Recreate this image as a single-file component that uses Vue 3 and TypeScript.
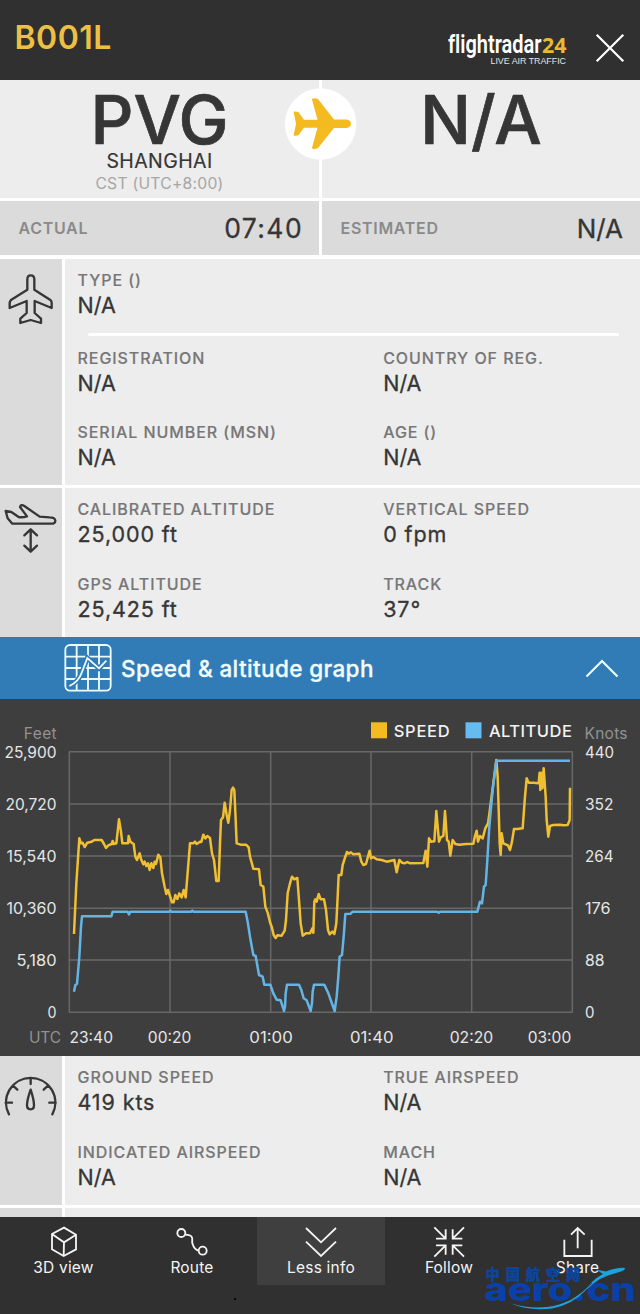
<script setup lang="ts">
interface Field {
  label: string
  value: string
}

type Segment = [offset: number, points: string]

const aircraft: Field[] = [
  { label: 'REGISTRATION', value: 'N/A' },
  { label: 'COUNTRY OF REG.', value: 'N/A' },
  { label: 'SERIAL NUMBER (MSN)', value: 'N/A' },
  { label: 'AGE ()', value: 'N/A' },
]

const altitudeFields: Field[] = [
  { label: 'CALIBRATED ALTITUDE', value: '25,000 ft' },
  { label: 'VERTICAL SPEED', value: '0 fpm' },
  { label: 'GPS ALTITUDE', value: '25,425 ft' },
  { label: 'TRACK', value: '37°' },
]

const speedFields: Field[] = [
  { label: 'GROUND SPEED', value: '419 kts' },
  { label: 'TRUE AIRSPEED', value: 'N/A' },
  { label: 'INDICATED AIRSPEED', value: 'N/A' },
  { label: 'MACH', value: 'N/A' },
]

const isNumeric = (value: string): boolean => /\d/.test(value)

// Chart series, in thirds of a pixel; each segment has its own x offset.
const speedSegments: Segment[] = [
  [0, '222,672 229,520 238,385 243,400 248,398 254,411 262,398 275,395 283,390 305,390 312,402 318,414 325,406 335,402 338,393 341,402 349,400 353,365 357,328 363,365 367,400 384,400 386,378 391,395 401,402 406,440 411,450 419,430 424,450 430,463 434,455 439,468 444,460 449,480 454,460 460,474 464,455 468,462 475,434 481,442 486,490 490,510 494,530 499,552 504,540 509,555 516,577 521,577 526,555 532,567 538,550 545,562 551,540 557,562 562,500 566,450 570,400 580,400 585,395 590,402 600,395 604,396 610,374 616,385 622,378 630,384 636,430 642,450 649,513 656,513'],
  [600, '60,400 63,330 69,322 74,278 80,315 85,338 90,300 95,240 99,233 103,240 107,330 110,400 122,404 138,404 146,412 150,440 160,476 177,478 182,525 190,530 196,590 203,608 211,640 215,650 221,675 227,684 232,676 245,677 254,662 258,630 263,550 270,520 276,500 283,508 292,504 297,570 302,640 308,677 318,670 330,670 337,655 340,668 343,575 346,568 350,575 356,552 362,568 372,568 378,600 384,660 389,673 397,665 403,672 409,640 413,560 416,495 424,495 428,465 436,440 441,426 446,431 453,427 460,433 478,431 484,455 490,465 498,462 504,440 509,422 513,445 520,441 530,448 545,450 560,455 583,450 590,487 598,450'],
  [1200, '6,458 14,460 22,456 30,460 70,459 77,422 82,470 87,385 93,395 103,394 109,303 117,395 122,382 130,378 135,303 141,390 146,395 151,437 158,390 166,402 178,404 198,402 220,401 225,378 230,362 234,395 240,378 248,385 256,355 264,340 268,312 278,235 289,150 293,200 297,330 299,400 302,435 305,370 310,400 324,406 330,420 336,395 342,357 352,357 368,355 375,260 380,205 386,218 400,218 416,220 419,188 421,240 424,188 427,235 431,175 437,260 440,330 445,380 450,348 460,345 480,344 490,346 503,345 509,330 510,233'],
]

const altitudeSegments: Segment[] = [
  [0, '222,845 226,825 231,822 238,740 243,650 246,619 334,619 338,605 383,605 387,613 391,605 508,605 511,602 514,605 574,605 577,602 580,605'],
  [600, '60,605 137,605 143,635 150,680 160,735 167,738 177,795 188,800 193,824 211,824 220,850 230,869 242,871 252,903 255,890 257,850 261,824 297,824 304,840 311,865 320,871 332,903 336,880 338,845 342,824 373,824 385,850 404,903 410,860 415,800 419,740 426,735 431,680 436,612 452,611 458,605'],
  [1200, '112,605 116,608 120,605 232,605 240,575 246,580 252,530 257,525 262,450 268,350 278,240 289,152 510,152'],
]

function join(segments: Segment[]): string {
  return segments
    .flatMap(([offset, points]) =>
      points.split(' ').map((p) => {
        const [x, y] = p.split(',').map(Number)
        return `${x + offset},${y}`
      }),
    )
    .join(' ')
}

const speedLine = join(speedSegments)
const altitudeLine = join(altitudeSegments)

const rows = [125, 282, 438, 595, 750, 907]
const cols = [208, 510, 812, 1113, 1415, 1717]

const feet = [
  { text: '25,900', y: 59, w: 52 },
  { text: '20,720', y: 111, w: 51 },
  { text: '15,540', y: 163, w: 50 },
  { text: '10,360', y: 215.3, w: 50 },
  { text: '5,180', y: 267, w: 40 },
  { text: '0', y: 319.3, w: 9 },
]

const knots = [
  { text: '440', y: 59, w: 29 },
  { text: '352', y: 111, w: 28.5 },
  { text: '264', y: 163, w: 28.5 },
  { text: '176', y: 215.3, w: 25.5 },
  { text: '88', y: 267, w: 19.5 },
  { text: '0', y: 319.3, w: 9.5 },
]

const times = [
  { text: '23:40', x: 69.5 },
  { text: '00:20', x: 147.8 },
  { text: '01:00', x: 249.3 },
  { text: '01:40', x: 350 },
  { text: '02:20', x: 449.7 },
  { text: '03:00', x: 527.7 },
]
</script>

<template>
  <div class="page">
    <header class="top">
      <h1 class="callsign">B001L</h1>
      <svg class="logo" width="122" height="40" viewBox="446 28 122 40">
        <text class="brand" x="448" y="52.7" textLength="93.500" lengthAdjust="spacingAndGlyphs">flightradar</text>
        <text class="brand-num" x="542" y="52.7" textLength="24.500" lengthAdjust="spacingAndGlyphs">24</text>
        <text class="brand-sub" x="490.5" y="63.7" textLength="75.5" lengthAdjust="spacingAndGlyphs">LIVE AIR TRAFFIC</text>
      </svg>
      <svg class="close" width="30" height="30" viewBox="0 0 30 30">
        <path d="M1.7 1.7L28.3 28.3M28.3 1.7L1.7 28.3" />
      </svg>
    </header>

    <section class="airports">
      <div class="airport">
        <div class="code">PVG</div>
        <div class="city">SHANGHAI</div>
        <div class="zone">CST (UTC+8:00)</div>
      </div>
      <div class="airport">
        <div class="code">N/A</div>
      </div>
      <svg class="badge" width="72" height="72" viewBox="285 87.5 72 72">
        <circle cx="320.7" cy="123.5" r="35.7" fill="#fff" />
        <path
          d="M293.6 111.2Q296.500 110.600 298.600 111.800L304 119.200L317.500 119.300L311.800 98.200Q315 97 318 98.600L334 118.900H346.500Q351 119.600 351 123.200Q351 126.800 346.500 127.500H334L318 147.400Q315 149 311.800 148L317.500 127.200L304 127.200L298.600 134.600Q296.500 135.600 293.600 135L296 123.200Z"
          fill="#f4bb20"
        />
      </svg>
    </section>

    <section class="times">
      <div class="time"><span class="time-label">ACTUAL</span><span class="time-value clock">07:40</span></div>
      <div class="time"><span class="time-label">ESTIMATED</span><span class="time-value">N/A</span></div>
    </section>

    <section class="info aircraft">
      <div class="side">
        <svg width="62" height="80" viewBox="0 0 186 240">
          <path
            class="ink"
            d="M82 92V61Q82 49 92 49Q103 49 103 61V92L150 122Q155 126 155 131V147L104 126V162L123 179V192L92 183L61 192V179L80 162V126L29 147V131Q30 126 34 122Z"
          />
        </svg>
      </div>
      <div class="body">
        <div class="field">
          <div class="label">TYPE ()</div>
          <div class="value">N/A</div>
        </div>
        <hr class="rule" />
        <div class="grid">
          <div v-for="f in aircraft" :key="f.label" class="field">
            <div class="label">{{ f.label }}</div>
            <div class="value" :class="{ numeric: isNumeric(f.value) }">{{ f.value }}</div>
          </div>
        </div>
      </div>
    </section>

    <section class="info altitude">
      <div class="side">
        <svg width="62" height="80" viewBox="0 24 186 240">
          <path
            class="ink"
            d="M17 93L23 115L37 131H152Q166 131 166 122Q165 112 148 112L119 110L73 78Q63 72 60 81L81 109Q68 113 56 111L34 96Z"
          />
          <path class="ink" d="M92 148V213M73 166L92 148L111 166M73 197L92 215L111 197" />
        </svg>
      </div>
      <div class="body">
        <div class="grid">
          <div v-for="f in altitudeFields" :key="f.label" class="field">
            <div class="label">{{ f.label }}</div>
            <div class="value" :class="{ numeric: isNumeric(f.value) }">{{ f.value }}</div>
          </div>
        </div>
      </div>
    </section>

    <section class="bar">
      <svg class="bar-icon" width="48" height="48" viewBox="192 492 144 144">
        <rect x="196" y="495" width="136" height="137" rx="14" />
        <path d="M230 495V632M264 495V632M297 495V632M196 530H332M196 564H332M196 597H332" />
        <path class="halo" d="M208 618Q236 606 246 576L262 534L297 565L322 540" />
        <path class="trend" d="M208 618Q236 606 246 576L262 534L297 565L319 542" />
      </svg>
      <span class="bar-title">Speed &amp; altitude graph</span>
      <svg class="bar-chevron" width="34" height="20" viewBox="0 0 34 20">
        <path d="M1.500 18.500L17 3L32.500 18.500" />
      </svg>
    </section>

    <section class="chart">
      <svg width="640" height="357" viewBox="0 0 640 357">
        <g transform="translate(0 11) scale(0.33333)">
          <path v-for="y in rows" :key="'r' + y" class="gridline" :d="`M206.500 ${y}H1718.500`" />
          <path v-for="x in cols" :key="'c' + x" class="gridline" :d="`M${x} 125V907`" />
          <polyline class="series speed" :points="speedLine" />
          <polyline class="series alt" :points="altitudeLine" />
        </g>
        <rect x="371" y="23.300" width="16" height="16" fill="#f4bb20" />
        <text class="legend" x="393.700" y="38.300" textLength="56" lengthAdjust="spacing">SPEED</text>
        <rect x="465.500" y="23.300" width="16" height="16" fill="#66bcf0" />
        <text class="legend" x="488.900" y="38.300" textLength="83" lengthAdjust="spacing">ALTITUDE</text>
        <text class="unit" x="23.700" y="39.600" textLength="33" lengthAdjust="spacing">Feet</text>
        <text class="unit" x="584.500" y="39.600" textLength="43" lengthAdjust="spacing">Knots</text>
        <text class="unit" x="29" y="343.800" textLength="32" lengthAdjust="spacing">UTC</text>
        <text
          v-for="t in feet"
          :key="'f' + t.text"
          class="tick"
          :x="56.500 - t.w"
          :y="t.y"
          :textLength="t.w"
          lengthAdjust="spacingAndGlyphs"
        >{{ t.text }}</text>
        <text
          v-for="t in knots"
          :key="'k' + t.text"
          class="tick"
          x="585"
          :y="t.y"
          :textLength="t.w"
          lengthAdjust="spacingAndGlyphs"
        >{{ t.text }}</text>
        <text
          v-for="t in times"
          :key="t.text"
          class="tick"
          :x="t.x"
          y="343.800"
          textLength="43.500"
          lengthAdjust="spacingAndGlyphs"
        >{{ t.text }}</text>
      </svg>
    </section>

    <section class="info speeds">
      <div class="side">
        <svg width="62" height="80" viewBox="0 18 186 240">
          <path
            class="ink"
            d="M27 193A74 74 0 1 1 157 193M17 158H36M148 158H167M92 84V102M39 107L52 119M144 107L131 119"
          />
          <path class="ink" d="M92 119Q102 150 102 166Q102 178 92 178Q81 178 81 166Q81 150 92 119Z" />
        </svg>
      </div>
      <div class="body">
        <div class="grid">
          <div v-for="f in speedFields" :key="f.label" class="field">
            <div class="label">{{ f.label }}</div>
            <div class="value" :class="{ numeric: isNumeric(f.value) }">{{ f.value }}</div>
          </div>
        </div>
      </div>
    </section>

    <section class="info stub">
      <div class="side"></div>
      <div class="body"></div>
    </section>

    <nav class="tabs">
      <div class="tab">
        <svg width="44" height="36" viewBox="124 516 132 108">
          <path d="M190 533L226 554V598L189 618L154 598V552ZM154 552L190 577L226 554M190 577L189 618" />
        </svg>
        <span>3D view</span>
      </div>
      <div class="tab">
        <svg width="44" height="36" viewBox="510 516 132 108">
          <circle cx="544" cy="549" r="12" />
          <circle cx="608" cy="602" r="12" />
          <path d="M556 554C586 556 574 570 577 580S584 600 596 602" />
        </svg>
        <span>Route</span>
      </div>
      <div class="tab active">
        <svg width="44" height="36" viewBox="-64 66 132 108">
          <path d="M-43 84L2 127L47 84M-43 125L2 168L47 125" />
        </svg>
        <span>Less info</span>
      </div>
      <div class="tab">
        <svg width="44" height="36" viewBox="321 66 132 108">
          <path d="M343 82L377 116M377 88V116H348M432 82L398 116M398 88V116H427M343 170L377 136M377 164V136H348M432 170L398 136M398 164V136H427" />
        </svg>
        <span>Follow</span>
      </div>
      <div class="tab">
        <svg width="44" height="36" viewBox="708 66 132 108">
          <path d="M733 119V168H815V119M773 145V84M753 104L773 84L794 104" />
        </svg>
        <span>Share</span>
      </div>
      <i class="speck"></i>
      <svg class="watermark" width="160" height="54" viewBox="480 1260 160 54">
        <text class="wm-cn" x="485.500" y="1279.500" textLength="95" lengthAdjust="spacing">中国航空网</text>
        <text class="wm-en" x="484.500" y="1301" textLength="151.500" lengthAdjust="spacingAndGlyphs">aero.cn</text>
        <path
          fill="#1aa3df"
          d="M511 1303.500Q545 1313 570 1300Q584 1292 592 1282Q597 1277 603 1274L596 1269.500L606 1271.500Q616 1267.500 624 1267.800Q627 1269 621 1271.500L608 1275.500L600 1279Q592 1284 586 1290Q572 1305 552 1308.500Q528 1311 511 1303.500Z"
        />
        <path fill="none" stroke="#303030" stroke-width="0.700" d="M516 1304.500Q548 1311 572 1299Q584 1291 592 1283" />
      </svg>
    </nav>
  </div>
</template>

<style>
body {
  margin: 0;
  background: #303030;
}
</style>

<style scoped>
.page {
  width: 640px;
  height: 1314px;
  overflow: hidden;
  display: flex;
  flex-direction: column;
  background: #fff;
  font-family: Inter, 'Liberation Sans', sans-serif;
  color: #363636;
}

.top {
  height: 80px;
  flex: none;
  box-sizing: border-box;
  padding: 0 15px 0 14.500px;
  display: flex;
  align-items: flex-start;
  background: #303030;
}
.callsign {
  margin: 18px auto 0 0;
  font-size: 32px;
  line-height: 40px;
  font-weight: 600;
  letter-spacing: 0.500px;
  color: #edbf42;
}
.logo { margin: 28px 27px 0 0; }
.brand { font: 600 25.500px Roboto, sans-serif; fill: #fff; font-variant-ligatures: none; }
.brand-num { font: 700 20.500px 'Open Sans', sans-serif; fill: #eab92f; }
.brand-sub { font: 400 8.500px 'Liberation Sans', sans-serif; fill: #e6e6e6; }
.close { margin-top: 33px; }
.close path { fill: none; stroke: #fff; stroke-width: 2.200; }

.airports {
  position: relative;
  flex: none;
  height: 118px;
  display: grid;
  grid-template-columns: 319px 318px;
  column-gap: 3px;
}
.airport {
  box-sizing: border-box;
  padding-top: 9px;
  background: #ededed;
  text-align: center;
}
.code {
  font-size: 67px;
  line-height: 62px;
  font-weight: 500;
  -webkit-text-stroke: 0.700px #363636;
}
.city { font-size: 19.500px; line-height: 21px; letter-spacing: 0.400px; -webkit-text-stroke: 0.200px #363636; }
.zone { font-size: 15.700px; line-height: 23px; color: #a6a6a6; letter-spacing: 0.250px; }
.badge { position: absolute; left: 285px; top: 7.500px; }

.times {
  flex: none;
  height: 54px;
  margin: 3px 0 4px;
  display: grid;
  grid-template-columns: 319px 318px;
  column-gap: 3px;
}
.time {
  display: flex;
  align-items: center;
  justify-content: space-between;
  padding: 0 17px 0 18.500px;
  background: #dbdbdb;
}
.time-label { font-size: 16px; font-weight: 600; color: #8a8a8a; letter-spacing: 0.700px; }
.time-value { font-size: 26px; -webkit-text-stroke: 0.300px #363636; }
.clock { font-size: 26.500px; letter-spacing: 1.400px; margin-right: -1px; }

.info {
  flex: none;
  display: grid;
  grid-template-columns: 62px 575px;
  column-gap: 3px;
}
.aircraft { height: 226px; margin-bottom: 3px; }
.altitude { height: 149px; }
.speeds { height: 149px; margin-bottom: 3px; }
.stub { height: 9px; }
.side { background: #dbdbdb; }
.side svg { display: block; }
.ink {
  fill: none;
  stroke: #363636;
  stroke-width: 7;
  stroke-linejoin: round;
  stroke-linecap: round;
}
.body { background: #ededed; padding: 10px 0 0 12.500px; }
.rule {
  width: 531px;
  height: 3px;
  margin: 14px 0 10.500px 10px;
  border: 0;
  border-radius: 2px;
  background: #fff;
}
.grid {
  display: grid;
  grid-template-columns: 305.700px 1fr;
  row-gap: 24.600px;
}
.label {
  font-size: 16px;
  line-height: 22px;
  font-weight: 500;
  letter-spacing: 0.930px;
  color: #777;
  white-space: nowrap;
  -webkit-text-stroke: 0.150px #777;
}
.value { font-size: 21.500px; line-height: 29px; white-space: nowrap; -webkit-text-stroke: 0.300px #363636; margin-bottom: -1px; }
.numeric { letter-spacing: 0.900px; }

.bar {
  flex: none;
  height: 62px;
  box-sizing: border-box;
  padding: 0 21px 0 64px;
  display: flex;
  align-items: center;
  background: #317cb6;
}
.bar svg { fill: none; stroke: #ecfcff; stroke-width: 5.500; }
.bar-icon .halo { stroke: #317cb6; stroke-width: 15; }
.bar-title {
  margin-left: 9px;
  margin-right: auto;
  font-size: 22.500px;
  font-weight: 500;
  letter-spacing: 0.370px;
  color: #f3fdff;
  -webkit-text-stroke: 0.300px #f3fdff;
}
.bar .bar-chevron { stroke-width: 2.200; }

.chart { flex: none; height: 357px; background: #3e3e3e; }
.chart svg { display: block; }
.gridline { stroke: #686868; stroke-width: 4.500; fill: none; }
.series { fill: none; stroke-width: 7.500; stroke-linejoin: round; }
.speed { stroke: #f0bf32; }
.alt { stroke: #64b5e6; }
.legend { font-size: 16.500px; font-weight: 500; fill: #f2f2f2; }
.unit { font-size: 15.500px; fill: #929292; }
.tick { font-size: 15.700px; fill: #e6e6e6; }

.tabs {
  position: relative;
  flex: none;
  width: 642px;
  height: 97px;
  display: grid;
  grid-template-columns: 127px 130px 128px 128px 129px;
  background: #303030;
}
.tab {
  height: 68px;
  display: flex;
  flex-direction: column;
  align-items: center;
  padding-top: 5px;
  box-sizing: border-box;
  font-size: 15.500px;
  line-height: 20px;
  letter-spacing: 0.200px;
  color: #f4f4f4;
}
.tab svg { flex: none; fill: none; stroke: #f4f4f4; stroke-width: 5.500; }
.active { background: #3f3f3f; }
.speck {
  position: absolute;
  left: 234px;
  top: 81px;
  width: 2px;
  height: 2px;
  background: #080808;
}
.watermark { position: absolute; left: 480px; top: 43px; }
.wm-cn { font: 900 14.500px 'Noto Sans CJK SC', sans-serif; fill: #0c459b; stroke: #0c459b; stroke-width: 0.400px; }
.wm-en { font: 800 33px Inter, sans-serif; fill: #0a41a8; }
</style>
